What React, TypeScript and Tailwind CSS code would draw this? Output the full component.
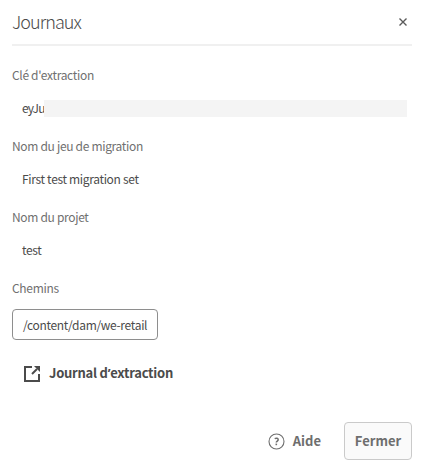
import type { ReactNode } from "react";

function Field({ label, children }: { label: string; children: ReactNode }) {
  return (
    <div className="h-[71px]">
      <div className="flex h-5 items-center text-[12px] tracking-[-0.32px] text-[#707070]">
        <span>{label}</span>
      </div>
      <div className="mt-[13px] flex h-5 items-center pl-[10px] text-[12px] tracking-[-0.33px] text-[#4b4b4b]">{children}</div>
    </div>
  );
}

export default function App() {
  return (
    <div className="h-[466px] w-[421px] overflow-hidden whitespace-nowrap bg-white pl-3 pr-[9px] font-['Noto_Sans_CJK_SC',sans-serif]">
      <header className="flex h-[46px] w-[400px] items-center justify-between border-b-2 border-[#f0f0f0] pr-[5px]">
        <h1 className="pb-[3px] text-[18px] font-light leading-6 tracking-[-0.95px] text-[#4b4b4b]">Journaux</h1>
        <button aria-label="Fermer" className="text-[#5a5a5a]">
          <svg width="8" height="8" viewBox="0 0 8 8" fill="none" stroke="currentColor" strokeWidth="1.4">
            <path d="M.5 .5 7.5 7.5M7.5 .5 .5 7.5" />
          </svg>
        </button>
      </header>
      <main className="pt-[19px]">
        <Field label="Clé d'extraction">
          <span className="w-[22px] shrink-0 tracking-[-0.9px]">eyJu</span>
          <span className="mt-px h-[17px] w-[363px] bg-[#f4f4f4]" />
        </Field>
        <Field label="Nom du jeu de migration">
          <span>First test migration set</span>
        </Field>
        <Field label="Nom du projet">
          <span>test</span>
        </Field>
        <div className="flex h-5 items-center text-[12px] tracking-[-0.3px] text-[#707070]">
          <span>Chemins</span>
        </div>
        <div className="mt-[11px] flex h-[31px] w-[146px] items-center rounded-[4px] border border-[#8e8e8e] pl-[10px] text-[12px] tracking-[-0.32px] text-[#4b4b4b]">
          <span>/content/dam/we-retail</span>
        </div>
        <a className="mt-[23px] flex h-5 items-center pl-3 text-[13px] font-bold text-[#4b4b4b]">
          <svg className="mr-[9px] mt-[2px] shrink-0" width="16" height="16" viewBox="0 0 16 16" fill="none" stroke="currentColor" strokeWidth="2">
            <path d="M8 1H1v14h14V8" />
            <path d="M8 8 13 3" />
            <path d="M10 0h6v6z" fill="currentColor" stroke="none" />
          </svg>
          <span className="leading-5 tracking-[-0.25px]">
            Journal d<span className="font-['Open_Sans',sans-serif] leading-none">’</span>extraction
          </span>
        </a>
      </main>
      <footer className="mt-[39px] flex h-[38px] items-center justify-end text-[13px] font-bold text-[#6e6e6e]">
        <svg className="mr-[8px] mt-px" width="17" height="17" viewBox="0 0 17 17" fill="none" stroke="currentColor" strokeWidth="1.1">
          <circle cx="8.5" cy="8.5" r="7.5" />
          <path d="M6.7 5.7c1.6-1 3.5-.5 3.5 1 0 1.3-1.9 1.5-1.9 2.9" strokeWidth="1.5" />
          <path d="M8.3 10.6v1.6" strokeWidth="1.6" />
        </svg>
        <span className="mr-[23px]">Aide</span>
        <button className="flex h-[38px] w-[68px] items-center justify-center rounded-[4px] border border-[#cacaca] bg-[#fafafa]">
          <span>Fermer</span>
        </button>
      </footer>
    </div>
  );
}
